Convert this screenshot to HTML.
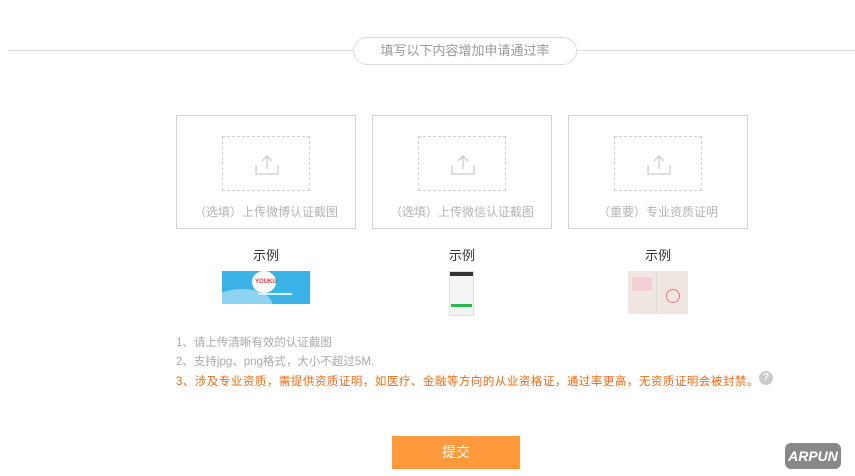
<!DOCTYPE html>
<html><head><meta charset="utf-8"><style>
body{margin:0;width:855px;height:476px;background:#fff;position:relative;overflow:hidden;font-family:"Liberation Sans","Noto Sans CJK SC",sans-serif}
.a{position:absolute}
.box{position:absolute;top:115px;width:178px;height:112px;border:1px solid #d6d6d6}
.dash{position:absolute;left:45px;top:20px;width:86px;height:53px;border:1px dashed #d0d0d0}
.lbl{position:absolute;top:87px;width:100%;text-align:center;font-size:12px;color:#b4b4b4}
.ex{position:absolute;top:245px;font-size:13px;color:#333;width:60px;text-align:center}
.t{position:absolute;left:176px;font-size:11.5px;color:#aaa;white-space:nowrap}
</style></head><body>
<div class="a" style="left:8px;top:50px;width:847px;height:1px;background:#ddd"></div>
<div class="a" style="left:353px;top:37px;width:222px;height:26px;border:1px solid #ddd;border-radius:14px;background:#fff;text-align:center;line-height:26px;font-size:13px;color:#999">填写以下内容增加申请通过率</div>

<div class="box" style="left:176px"><div class="dash"></div>
<svg class="a" style="left:75px;top:37px" width="30" height="24" viewBox="0 0 30 24"><path d="M15 16V3M10 8l5-5 5 5M4 12v9h22v-9" fill="none" stroke="#ccc" stroke-width="1.3"/></svg>
<div class="lbl">（选填）上传微博认证截图</div></div>
<div class="box" style="left:372px"><div class="dash"></div>
<svg class="a" style="left:75px;top:37px" width="30" height="24" viewBox="0 0 30 24"><path d="M15 16V3M10 8l5-5 5 5M4 12v9h22v-9" fill="none" stroke="#ccc" stroke-width="1.3"/></svg>
<div class="lbl">（选填）上传微信认证截图</div></div>
<div class="box" style="left:568px"><div class="dash"></div>
<svg class="a" style="left:75px;top:37px" width="30" height="24" viewBox="0 0 30 24"><path d="M15 16V3M10 8l5-5 5 5M4 12v9h22v-9" fill="none" stroke="#ccc" stroke-width="1.3"/></svg>
<div class="lbl">（重要）专业资质证明</div></div>

<div class="ex" style="left:236px">示例</div>
<div class="ex" style="left:432px">示例</div>
<div class="ex" style="left:628px">示例</div>

<div class="a" style="left:222px;top:271px;width:88px;height:33px;background:#3bb3e6;overflow:hidden">
<div class="a" style="left:30px;top:0;width:24px;height:22px;border-radius:50%;background:#fff"></div>
<div class="a" style="left:-10px;top:18px;width:60px;height:30px;border-radius:50%;background:#8fd3f2"></div>
<div class="a" style="left:33px;top:8px;font-size:6px;color:#e33;font-weight:bold">YOUKU</div>
<div class="a" style="left:36px;top:22px;width:34px;height:2px;background:#d9f1fb"></div></div>
<div class="a" style="left:449px;top:271px;width:25px;height:45px;background:#f4f4f4;border:1px solid #e0e0e0;box-sizing:border-box">
<div style="height:4px;background:#333"></div>
<div class="a" style="left:1px;top:32px;width:21px;height:3px;background:#2eb84b"></div></div>
<div class="a" style="left:628px;top:271px;width:60px;height:43px;background:#efe6e2">
<div class="a" style="left:28px;top:0;width:1px;height:43px;background:#ddd"></div>
<div class="a" style="left:38px;top:18px;width:12px;height:12px;border-radius:50%;border:1.5px solid #e77"></div>
<div class="a" style="left:4px;top:6px;width:20px;height:14px;background:#f3d0d6"></div></div>

<div class="t" style="top:334px">1、请上传清晰有效的认证截图</div>
<div class="t" style="top:353px">2、支持jpg、png格式，大小不超过5M.</div>
<div class="t" style="top:373px;color:#f06a0f;letter-spacing:0.5px">3、涉及专业资质，需提供资质证明，如医疗、金融等方向的从业资格证，通过率更高，无资质证明会被封禁。</div>
<div class="a" style="left:759px;top:371px;width:14px;height:14px;border-radius:50%;background:#ccc;color:#fff;font-size:10px;text-align:center;line-height:14px;font-weight:bold">?</div>

<div class="a" style="left:392px;top:436px;width:128px;height:33px;background:#ff9a3c;color:#fff;font-size:14px;text-align:center;line-height:33px">提交</div>
<div class="a" style="left:785px;top:443px;width:56px;height:26px;background:#888;border-radius:6px;color:#fff;font-style:italic;font-weight:bold;font-size:14px;text-align:center;line-height:26px">ARPUN</div>
</body></html>
